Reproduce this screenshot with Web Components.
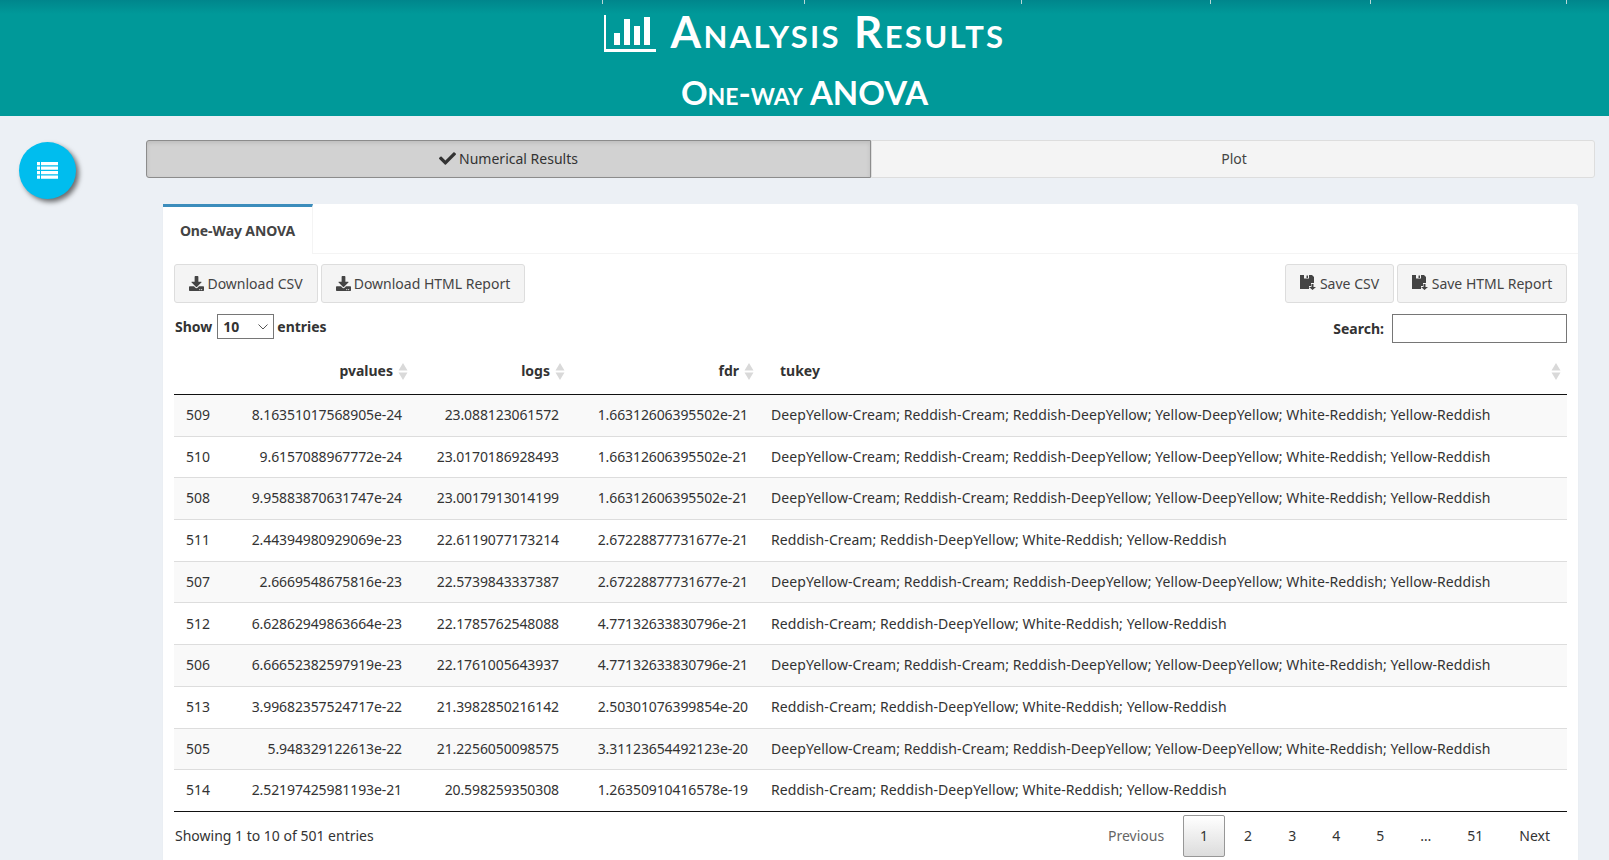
<!DOCTYPE html>
<html>
<head>
<meta charset="utf-8">
<title>Analysis Results</title>
<style>
  html, body { margin: 0; height: 860px; overflow: hidden; }
  body { background: #ecf0f5; color: #333; font-family: "Noto Sans", "Liberation Sans", sans-serif; font-size: 14px; }
  .page { display: flex; align-items: flex-start; }
  .side { width: 127px; padding: 26px 0 0 19px; flex: none; }
  .content { width: 1449px; padding-top: 24px; flex: none; }
</style>
</head>
<body>
<app-header title-text="Analysis Results" sub-text="One-way ANOVA"></app-header>
<div class="page">
  <div class="side"><fab-button></fab-button></div>
  <div class="content">
    <tab-switch></tab-switch>
    <result-box tab="One-Way ANOVA">
      <tool-bar></tool-bar>
      <table-controls></table-controls>
      <data-table></data-table>
      <table-footer></table-footer>
    </result-box>
  </div>
</div>

<script>
/* === ICONOS === */
const ICON_CHECK = '<svg viewBox="0 0 512 512" width="17" height="17"><path fill="currentColor" d="M173.898 439.404l-166.4-166.4c-9.997-9.997-9.997-26.206 0-36.204l36.203-36.204c9.997-9.998 26.207-9.998 36.204 0L192 312.69 432.095 72.596c9.997-9.997 26.207-9.997 36.204 0l36.203 36.204c9.997 9.997 9.997 26.206 0 36.204l-294.4 294.401c-9.998 9.997-26.207 9.997-36.204-.001z"/></svg>';
const ICON_DOWNLOAD = '<svg viewBox="0 0 512 512" width="15" height="15"><path fill="currentColor" d="M216 0h80c13.3 0 24 10.7 24 24v168h87.7c17.8 0 26.7 21.5 14.1 34.1L269.7 378.3c-7.5 7.5-19.8 7.5-27.3 0L90.1 226.1c-12.6-12.6-3.7-34.1 14.1-34.1H192V24c0-13.3 10.7-24 24-24zm296 376v112c0 13.3-10.7 24-24 24H24c-13.3 0-24-10.7-24-24V376c0-13.3 10.7-24 24-24h146.7l49 49c20.1 20.1 52.5 20.1 72.6 0l49-49H488c13.3 0 24 10.7 24 24zm-124 88c0-11-9-20-20-20s-20 9-20 20 9 20 20 20 20-9 20-20zm64 0c0-11-9-20-20-20s-20 9-20 20 9 20 20 20 20-9 20-20z"/></svg>';
const ICON_SAVE = '<svg viewBox="0 0 17 15" width="17" height="15" style="margin-bottom:3px"><path fill="currentColor" d="M0 0h12l2 2v6h-3v3H9v3H0z"/><rect x="4" y="0" width="5" height="3.500" fill="#f4f4f4"/><rect x="6.500" y=".5" width="1.500" height="2.500" fill="currentColor"/><path fill="currentColor" d="M11.500 9h2v3h2.500l-3.500 3-3.500-3h2.500z"/></svg>';

/* === COMPONENTES === */

class AppHeader extends HTMLElement {
  constructor() {
    super();
    this.attachShadow({ mode: "open" });
    const title = this.getAttribute("title-text");
    const sub = this.getAttribute("sub-text");
    this.shadowRoot.innerHTML = `
      <style>
        :host { display: block; }
        .bar {
          height: 116px;
          background: linear-gradient(#00868c 0, #009999 14px);
          color: white;
          display: flex;
          flex-direction: column;
          align-items: center;
          font-family: "Lato", sans-serif;
          font-variant: small-caps;
          position: relative;
          box-sizing: border-box;
        }
        .t1 { display: flex; align-items: center; gap: 15px; font-size: 44px; font-weight: 700; letter-spacing: 2.35px; line-height: 54px; margin-top: 4px; height: 54px; }
        .t1 svg { margin-top: 5px; }
        .t2 { font-size: 33px; font-weight: 700; line-height: 40px; margin-top: 14px; }
        .tick { position: absolute; top: 0; width: 1px; height: 4px; background: #b8d8d8; }
      </style>
      <div class="bar">
        <div class="tick" style="left:602px"></div>
        <div class="tick" style="left:804px"></div>
        <div class="tick" style="left:1021px"></div>
        <div class="tick" style="left:1210px"></div>
        <div class="tick" style="left:1370px"></div>
        <div class="tick" style="left:1566px"></div>
        <div class="t1">
          <svg width="52" height="37" viewBox="0 0 52 37"><path fill="#fff" d="M0 0h2v34h50v3H0zM10 18h6v12h-6zM20 4h6v26h-6zM30 11h6v19h-6zM40 2h6v28h-6z"/></svg>
          <span>${title}</span>
        </div>
        <div class="t2">${sub}</div>
      </div>`;
  }
}
customElements.define("app-header", AppHeader);

class FabButton extends HTMLElement {
  constructor() {
    super();
    this.attachShadow({ mode: "open" });
    this.shadowRoot.innerHTML = `
      <style>
        :host { display: block; width: 57px; height: 57px; }
        .fab {
          width: 57px; height: 57px; border-radius: 50%;
          background: #00bdee;
          box-shadow: 3px 3px 5px rgba(0, 0, 0, .55);
          display: flex; align-items: center; justify-content: center;
        }
      </style>
      <div class="fab">
        <svg width="21" height="17" viewBox="0 0 21 17"><path fill="#fff" d="M0 0h3v3.300H0zM4 0h17v3.300H4zM0 4.500h3v3.300H0zM4 4.500h17v3.300H4zM0 9h3v3.300H0zM4 9h17v3.300H4zM0 13.500h3v3.300H0zM4 13.500h17v3.300H4z"/></svg>
      </div>`;
  }
}
customElements.define("fab-button", FabButton);

class TabSwitch extends HTMLElement {
  constructor() {
    super();
    this.attachShadow({ mode: "open" });
    this.shadowRoot.innerHTML = `
      <style>
        :host { display: flex; height: 38px; font-size: 14px; color: #444; }
        .btn {
          flex: 1;
          box-sizing: border-box;
          display: flex; align-items: center; justify-content: center; gap: 3px;
          background: #f4f4f4;
          border: 1px solid #ddd;
          border-radius: 0 3px 3px 0;
          padding: 0 0 2px 2px;
        }
        .btn.active {
          flex: none; width: 725px;
          background: #d2d2d2;
          border-color: #8c8c8c;
          border-radius: 3px 0 0 3px;
          box-shadow: inset 0 2px 4px rgba(0, 0, 0, .1);
          color: #333;
          padding-left: 0;
        }
      </style>
      <div class="btn active">${ICON_CHECK}<span>Numerical Results</span></div>
      <div class="btn">Plot</div>`;
  }
}
customElements.define("tab-switch", TabSwitch);

class ResultBox extends HTMLElement {
  constructor() {
    super();
    this.attachShadow({ mode: "open" });
    const tab = this.getAttribute("tab");
    this.shadowRoot.innerHTML = `
      <style>
        :host { display: block; margin: 26px 17px 0; background: #fff; border-radius: 3px; box-shadow: 0 1px 1px rgba(0,0,0,.1); }
        .tabs { height: 49px; border-bottom: 1px solid #f4f4f4; display: flex; }
        .tab {
          width: 150px; box-sizing: border-box; margin-bottom: -1px; height: 50px;
          border-top: 3px solid #3c8dbc; border-right: 1px solid #f4f4f4;
          background: #fff; font-weight: 700; color: #444; font-size: 14px; letter-spacing: -.1px;
          display: flex; align-items: center; justify-content: center;
        }
        .body { padding: 10px 11px 10px; }
      </style>
      <div class="tabs"><div class="tab">${tab}</div></div>
      <div class="body"><slot></slot></div>`;
  }
}
customElements.define("result-box", ResultBox);

class ToolBar extends HTMLElement {
  constructor() {
    super();
    this.attachShadow({ mode: "open" });
    this.shadowRoot.innerHTML = `
      <style>
        :host { display: flex; justify-content: space-between; height: 39px; font-size: 14px; color: #444; }
        .group { display: flex; gap: 3px; }
        .b {
          box-sizing: border-box; height: 39px; display: flex; align-items: center; justify-content: center; gap: 3px;
          background: #f4f4f4; border: 1px solid #ddd; border-radius: 3px;
        }
      </style>
      <div class="group">
        <div class="b" style="width:144px">${ICON_DOWNLOAD}<span>Download CSV</span></div>
        <div class="b" style="width:204px">${ICON_DOWNLOAD}<span>Download HTML Report</span></div>
      </div>
      <div class="group">
        <div class="b" style="width:109px">${ICON_SAVE}<span>Save CSV</span></div>
        <div class="b" style="width:170px">${ICON_SAVE}<span>Save HTML Report</span></div>
      </div>`;
  }
}
customElements.define("tool-bar", ToolBar);

class TableControls extends HTMLElement {
  constructor() {
    super();
    this.attachShadow({ mode: "open" });
    this.shadowRoot.innerHTML = `
      <style>
        :host { display: flex; justify-content: space-between; align-items: flex-start; margin-top: 11px; height: 36px; font-size: 14px; font-weight: 700; color: #333; }
        .left, .right { display: flex; align-items: center; gap: 4px; }
        .left { height: 25px; padding-left: 1px; }
        .left .show { margin-right: 1px; }
        .right { height: 29px; gap: 8px; }
        .select {
          box-sizing: border-box; width: 57px; height: 25px; border: 1px solid #767676;
          display: flex; align-items: center; justify-content: space-between; padding: 0 5px;
          background: #fff; margin-right: -1px;
        }
        .search { box-sizing: border-box; width: 175px; height: 29px; border: 1px solid #767676; background: #fff; }
      </style>
      <div class="left">
        <span class="show">Show</span>
        <div class="select"><span>10</span><svg width="10" height="6" viewBox="0 0 10 6"><path d="M.5.500 5 5 9.500.500" fill="none" stroke="#555" stroke-width="1"/></svg></div>
        <span>entries</span>
      </div>
      <div class="right"><span>Search:</span><div class="search"></div></div>`;
  }
}
customElements.define("table-controls", TableControls);

const PAIRS_LONG = "DeepYellow-Cream; Reddish-Cream; Reddish-DeepYellow; Yellow-DeepYellow; White-Reddish; Yellow-Reddish";
const PAIRS_SHORT = "Reddish-Cream; Reddish-DeepYellow; White-Reddish; Yellow-Reddish";
const ROWS = [
  ["509", "8.16351017568905e-24", "23.088123061572", "1.66312606395502e-21", PAIRS_LONG],
  ["510", "9.6157088967772e-24", "23.0170186928493", "1.66312606395502e-21", PAIRS_LONG],
  ["508", "9.95883870631747e-24", "23.0017913014199", "1.66312606395502e-21", PAIRS_LONG],
  ["511", "2.44394980929069e-23", "22.6119077173214", "2.67228877731677e-21", PAIRS_SHORT],
  ["507", "2.6669548675816e-23", "22.5739843337387", "2.67228877731677e-21", PAIRS_LONG],
  ["512", "6.62862949863664e-23", "22.1785762548088", "4.77132633830796e-21", PAIRS_SHORT],
  ["506", "6.66652382597919e-23", "22.1761005643937", "4.77132633830796e-21", PAIRS_LONG],
  ["513", "3.99682357524717e-22", "21.3982850216142", "2.50301076399854e-20", PAIRS_SHORT],
  ["505", "5.948329122613e-22", "21.2256050098575", "3.31123654492123e-20", PAIRS_LONG],
  ["514", "2.52197425981193e-21", "20.598259350308", "1.26350910416578e-19", PAIRS_SHORT],
];

class DataTable extends HTMLElement {
  constructor() {
    super();
    this.attachShadow({ mode: "open" });
    const sort = '<svg class="sort" width="10" height="17" viewBox="0 0 10 17"><path fill="#d9d9d9" d="M5 0l4.500 7.500H.5zM.5 9.500h9L5 17z"/></svg>';
    const body = ROWS.map(r => `<tr><td>${r[0]}</td><td class="n">${r[1]}</td><td class="n">${r[2]}</td><td class="n">${r[3]}</td><td class="t">${r[4]}</td></tr>`).join("");
    this.shadowRoot.innerHTML = `
      <style>
        :host { display: block; font-size: 14px; color: #333; }
        table { border-collapse: collapse; table-layout: fixed; width: 1393px; border-bottom: 1px solid #111; }
        th { height: 41px; padding: 0 0 3px; font-weight: 700; border-bottom: 1px solid #111; position: relative; box-sizing: content-box; }
        th.r { text-align: right; padding-right: 21px; }
        th.l { text-align: left; padding-left: 20px; }
        .sort { position: absolute; right: 6px; top: 13px; }
        td { height: 39.2px; padding: 0 12px 1.5px; border-top: 1px solid #ddd; white-space: nowrap; box-sizing: content-box; }
        tr:first-child td { border-top: 0; }
        tr:nth-child(odd) td { background: #f9f9f9; }
        td.n { text-align: right; letter-spacing: -.1px; }
        td.t { padding-left: 11px; letter-spacing: .08px; }
      </style>
      <table>
        <colgroup><col style="width:60px"><col style="width:180px"><col style="width:157px"><col style="width:189px"><col></colgroup>
        <thead><tr><th></th><th class="r">pvalues${sort}</th><th class="r">logs${sort}</th><th class="r">fdr${sort}</th><th class="l">tukey${sort}</th></tr></thead>
        <tbody>${body}</tbody>
      </table>`;
  }
}
customElements.define("data-table", DataTable);

class TableFooter extends HTMLElement {
  constructor() {
    super();
    this.attachShadow({ mode: "open" });
    const pages = ["1", "2", "3", "4", "5", "…", "51"];
    this.shadowRoot.innerHTML = `
      <style>
        :host { display: flex; justify-content: space-between; font-size: 14px; color: #333; padding-top: 3px; }
        .info { padding: 11px 0 0 1px; }
        .pager { display: flex; gap: 2px; align-items: flex-start; }
        .p { box-sizing: border-box; height: 42px; min-width: 42px; padding: 0 16px 1px; display: flex; align-items: center; justify-content: center; border: 1px solid transparent; border-radius: 2px; }
        .p.on { border-color: #979797; background: linear-gradient(#fff, #dcdcdc); }
        .p.off { color: #666; }
      </style>
      <div class="info">Showing 1 to 10 of 501 entries</div>
      <div class="pager">
        <div class="p off">Previous</div>
        ${pages.map((p, i) => `<div class="p${i === 0 ? " on" : ""}">${p}</div>`).join("")}
        <div class="p">Next</div>
      </div>`;
  }
}
customElements.define("table-footer", TableFooter);
</script>
</body>
</html>
